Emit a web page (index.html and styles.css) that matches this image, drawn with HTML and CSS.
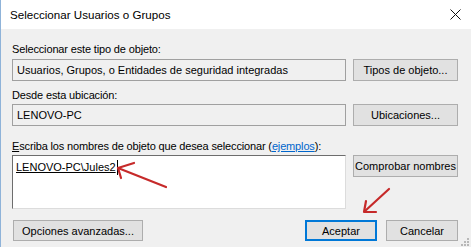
FILE: index.html
```html
<!DOCTYPE html>
<html lang="es">
<head>
    <meta charset="UTF-8">
    <title>Seleccionar Usuarios o Grupos</title>
    <link rel="stylesheet" href="styles.css">
</head>
<body>
    <div class="window">
        <div class="titlebar">
            <span class="title">Seleccionar Usuarios o Grupos</span>
            <svg class="close" width="11" height="11" viewBox="0 0 11 11">
                <path d="M0.5 0.5 L10.5 10.5 M10.5 0.5 L0.5 10.5" stroke="#111" stroke-width="1"/>
            </svg>
        </div>

        <div class="content">
            <div class="label first">Seleccionar este tipo de objeto:</div>
            <div class="row">
                <div class="textbox readonly">Usuarios, Grupos, o Entidades de seguridad integradas</div>
                <button class="btn side">Tipos de objeto...</button>
            </div>

            <div class="label">Desde esta ubicación:</div>
            <div class="row">
                <div class="textbox readonly">LENOVO-PC</div>
                <button class="btn side">Ubicaciones...</button>
            </div>

            <div class="label names-label"><u>E</u>scriba los nombres de objeto que desea seleccionar (<a href="#" class="link">ejemplos</a>):</div>
            <div class="row top">
                <div class="textbox names"><span class="entry">LENOVO-PC\Jules2</span><span class="caret"></span></div>
                <button class="btn side">Comprobar nombres</button>
            </div>

            <div class="footer">
                <button class="btn wide">Opciones avanzadas...</button>
                <div class="spacer"></div>
                <button class="btn action default">Aceptar</button>
                <button class="btn action">Cancelar</button>
            </div>
        </div>

        <!-- red annotation arrows drawn over the dialog -->
        <svg class="marks" width="471" height="247" viewBox="0 0 471 247">
            <g stroke="#c62a2a" stroke-width="2.2" fill="none" stroke-linecap="round" stroke-linejoin="round">
                <path d="M166 187 L118 168"/>
                <path d="M134 163 L118 168 L121 178"/>
                <path d="M389 189 L365 211"/>
                <path d="M366 201 L364 212 L376 212"/>
            </g>
        </svg>

        <svg class="grip" width="9" height="9" viewBox="0 0 9 9">
            <g fill="#b8b8b8">
                <rect x="7" y="1" width="2" height="2"/>
                <rect x="4" y="4" width="2" height="2"/>
                <rect x="7" y="4" width="2" height="2"/>
                <rect x="1" y="7" width="2" height="2"/>
                <rect x="4" y="7" width="2" height="2"/>
                <rect x="7" y="7" width="2" height="2"/>
            </g>
        </svg>
    </div>
</body>
</html>
```

FILE: styles.css
```css
body {
    margin: 0;
    font-family: "Liberation Sans", Arial, sans-serif;
    font-size: 11px;
    color: #000;
    background: #f0f0f0;
}

.window {
    position: relative;
    width: 471px;
    height: 247px;
    box-sizing: border-box;
    border-left: 1px solid #8fb3d9;
    background: #f0f0f0;
    overflow: hidden;
}

.titlebar {
    height: 29px;
    background: #fff;
    display: flex;
    align-items: center;
    padding: 0 10px 0 9px;
}

.title {
    flex: 1;
    font-size: 11.6px;
}

.content {
    padding: 0 13px 0 11px;
}

.label {
    height: 15px;
    line-height: 15px;
    margin-top: 7px;
    margin-bottom: 1px;
    white-space: nowrap;
    letter-spacing: -0.15px;
}

.label.first {
    margin-top: 13px;
    margin-bottom: 2px;
}

.label.names-label {
    margin-top: 13px;
}

.link {
    color: #0066cc;
}

.row {
    display: flex;
    align-items: center;
    gap: 7px;
}

.row.top {
    align-items: flex-start;
}

.textbox {
    flex: 1;
    height: 22px;
    line-height: 20px;
    box-sizing: border-box;
    border: 1px solid #a0a0a0;
    padding: 0 4px;
    white-space: nowrap;
    overflow: hidden;
}

.textbox.readonly {
    background: #f0f0f0;
}

.textbox.names {
    height: 54px;
    background: #fff;
    border-color: #6d6d6d #dcdcdc #dcdcdc #6d6d6d;
    padding: 4px 3px;
    line-height: 15px;
}

.entry {
    text-decoration: underline;
}

.caret {
    display: inline-block;
    width: 1px;
    height: 15px;
    background: #000;
    vertical-align: top;
    margin-left: 1px;
}

.btn {
    font-family: inherit;
    font-size: 11px;
    color: #000;
    background: #e1e1e1;
    border: 1px solid #adadad;
    border-radius: 0;
    height: 22px;
    padding: 0;
    box-sizing: border-box;
    white-space: nowrap;
}

.btn.side {
    width: 105px;
}

.footer {
    display: flex;
    align-items: center;
    gap: 9px;
    margin-top: 11px;
    padding-left: 1px;
}

.spacer {
    flex: 1;
}

.btn.wide {
    width: 130px;
    height: 21px;
}

.btn.action {
    width: 72px;
    height: 21px;
}

.btn.default {
    border: 2px solid #0078d7;
}

.marks {
    position: absolute;
    left: -1px;
    top: 0;
    pointer-events: none;
}

.grip {
    position: absolute;
    right: 2px;
    bottom: 1px;
}
```
